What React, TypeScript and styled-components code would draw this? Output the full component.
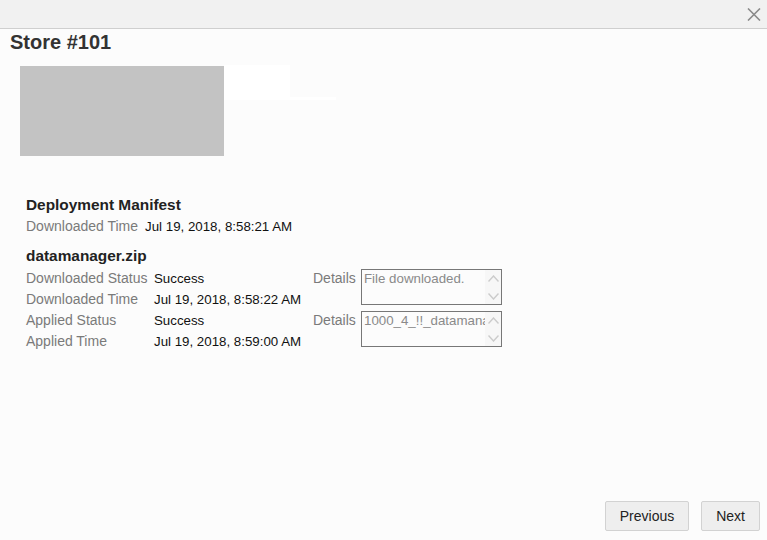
import styled, { createGlobalStyle } from "styled-components";

const GlobalStyle = createGlobalStyle`
  html, body {
    margin: 0;
    padding: 0;
    background: #fcfcfc;
    font-family: "Liberation Sans", Arial, sans-serif;
  }
`;

type Row = { label: string; value: string };

const packageRows: Row[] = [
  { label: "Downloaded Status", value: "Success" },
  { label: "Downloaded Time", value: "Jul 19, 2018, 8:58:22 AM" },
  { label: "Applied Status", value: "Success" },
  { label: "Applied Time", value: "Jul 19, 2018, 8:59:00 AM" },
];

const details = ["File downloaded.", "1000_4_!!_datamanager.zip"];

const CloseIcon = () => (
  <svg width="14" height="13" viewBox="0 0 14 13">
    <path d="M1 0.5 L13 12.5 M13 0.5 L1 12.5" stroke="#8a8a8a" strokeWidth="1.6" fill="none" />
  </svg>
);

const Chevron = ({ up }: { up?: boolean }) => (
  <svg width="11" height="7" viewBox="0 0 11 7">
    <path
      d={up ? "M0.5 6.5 L5.5 1 L10.5 6.5" : "M0.5 0.5 L5.5 6 L10.5 0.5"}
      stroke="#cbcbcb"
      strokeWidth="1.4"
      fill="none"
    />
  </svg>
);

const DetailsBox = ({ text }: { text: string }) => (
  <Box>
    <BoxText>{text}</BoxText>
    <ScrollTrack>
      <Chevron up />
      <Chevron />
    </ScrollTrack>
  </Box>
);

const PackageRow = ({ row, index }: { row: Row; index: number }) => (
  <>
    <GridLabel $row={index + 1}>{row.label}</GridLabel>
    <GridValue $row={index + 1}>{row.value}</GridValue>
    {index % 2 === 0 && (
      <>
        <DetailsLabel $row={index + 1}>Details</DetailsLabel>
        <DetailsCell $row={index + 1}>
          <DetailsBox text={details[index / 2]} />
        </DetailsCell>
      </>
    )}
  </>
);

export default function App() {
  return (
    <>
      <GlobalStyle />
      <Page>
        <TopBar>
          <CloseButton>
            <CloseIcon />
          </CloseButton>
        </TopBar>
        <Title>Store #101</Title>

        <Banner>
          <Picture />
          <Glare>
            <GlareTab />
            <GlareLine />
          </Glare>
        </Banner>

        <Content>
          <Heading>Deployment Manifest</Heading>
          <InlineRow>
            <Label>Downloaded Time</Label>
            <Value>Jul 19, 2018, 8:58:21 AM</Value>
          </InlineRow>

          <Heading $gap={10}>datamanager.zip</Heading>
          <PackageGrid>
            {packageRows.map((row, i) => (
              <PackageRow key={row.label} row={row} index={i} />
            ))}
          </PackageGrid>
        </Content>

        <Footer>
          <NavButton>Previous</NavButton>
          <NavButton>Next</NavButton>
        </Footer>
      </Page>
    </>
  );
}

const Page = styled.div`
  display: flex;
  flex-direction: column;
  height: 540px;
  background: #fcfcfc;
`;

const TopBar = styled.div`
  display: flex;
  justify-content: flex-end;
  align-items: center;
  height: 28px;
  background: #f1f1f1;
  border-bottom: 1px solid #cfcfcf;
  padding-right: 6px;
`;

const CloseButton = styled.button`
  display: flex;
  align-items: center;
  border: none;
  background: transparent;
  padding: 0;
  margin-top: 1px;
  cursor: pointer;
`;

const Title = styled.h1`
  margin: 0;
  padding: 1px 0 0 10px;
  font-size: 20px;
  line-height: 24px;
  font-weight: bold;
  color: #333;
`;

const Banner = styled.div`
  display: flex;
  margin: 11px 0 0 20px;
`;

const Picture = styled.div`
  width: 204px;
  height: 90px;
  margin-top: 1px;
  background: #c3c3c3;
`;

const Glare = styled.div`
  display: flex;
  flex-direction: column;
`;

const GlareTab = styled.div`
  width: 66px;
  height: 32px;
  background: #ffffff;
`;

const GlareLine = styled.div`
  width: 112px;
  height: 3px;
  background: #ffffff;
`;

const Content = styled.div`
  display: flex;
  flex-direction: column;
  padding-left: 26px;
  margin-top: 40px;
`;

const Heading = styled.h2<{ $gap?: number }>`
  margin: ${(p) => p.$gap ?? 0}px 0 2px;
  font-size: 15.4px;
  line-height: 18px;
  font-weight: bold;
  color: #222;
`;

const InlineRow = styled.div`
  display: flex;
  gap: 7px;
`;

const Label = styled.span`
  font-size: 14px;
  line-height: 21px;
  color: #7a7a7a;
  white-space: nowrap;
`;

const Value = styled.span`
  font-size: 13.3px;
  line-height: 21px;
  color: #111;
  white-space: nowrap;
`;

const PackageGrid = styled.div`
  display: grid;
  grid-template-columns: 128px 159px 48px 141px;
  grid-template-rows: repeat(4, 21px);
  margin-top: 1px;
`;

const GridLabel = styled(Label)<{ $row: number }>`
  grid-column: 1;
  grid-row: ${(p) => p.$row};
`;

const GridValue = styled(Value)<{ $row: number }>`
  grid-column: 2;
  grid-row: ${(p) => p.$row};
`;

const DetailsLabel = styled(Label)<{ $row: number }>`
  grid-column: 3;
  grid-row: ${(p) => p.$row};
`;

const DetailsCell = styled.div<{ $row: number }>`
  grid-column: 4;
  grid-row: ${(p) => p.$row} / span 2;
  padding-top: 1px;
`;

const Box = styled.div`
  display: flex;
  width: 141px;
  height: 36px;
  box-sizing: border-box;
  border: 1px solid #777;
  background: #fcfcfc;
`;

const BoxText = styled.div`
  flex: 1;
  overflow: hidden;
  white-space: nowrap;
  padding: 1px 0 0 2px;
  font-size: 13.3px;
  line-height: 15px;
  color: #8a8a8a;
`;

const ScrollTrack = styled.div`
  display: flex;
  flex-direction: column;
  align-items: center;
  justify-content: space-between;
  width: 16px;
  padding: 5px 0 4px;
  box-sizing: border-box;
  background: #f7f7f7;
`;

const Footer = styled.div`
  display: flex;
  justify-content: flex-end;
  gap: 12px;
  margin-top: auto;
  padding: 0 7px 9px 0;
`;

const NavButton = styled.button`
  height: 30px;
  padding: 0 14px;
  font-family: "Liberation Sans", Arial, sans-serif;
  font-size: 14px;
  color: #222;
  background: #eeeeee;
  border: 1px solid #d2d2d2;
  border-radius: 2px;
  cursor: pointer;
`;
